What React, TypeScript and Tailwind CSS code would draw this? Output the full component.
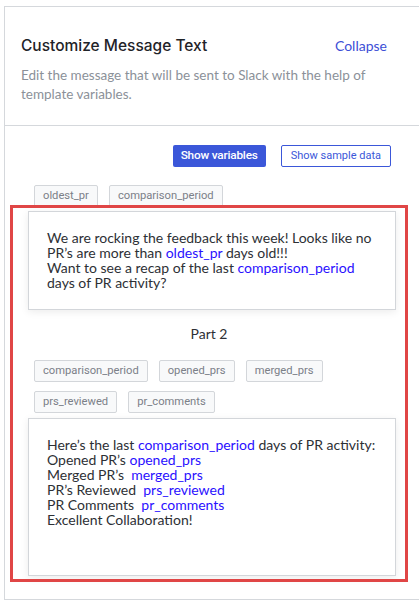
import React from "react";

const Chip = ({ label }: { label: string }) => (
  <div className="h-[22px] px-[8px] flex items-center bg-[#f8f9fa] border border-[#d3d6da] rounded-[2px] text-[11.2px] text-[#7b8088] leading-none" style={{ fontFamily: "Roboto, sans-serif" }}>
    {label}
  </div>
);

const V = ({ children }: { children: React.ReactNode }) => (
  <span className="text-[#2a10ff]">{children}</span>
);

export default function App() {
  const lato = { fontFamily: "Lato, 'Noto Sans', sans-serif" };
  const inter = { fontFamily: "Inter, 'Noto Sans', sans-serif" };
  const roboto = { fontFamily: "Roboto, sans-serif" };
  return (
    <div className="relative w-[419px] h-[600px] bg-white overflow-hidden" style={lato}>
      <div className="ml-[4px] mt-[6px] h-[594px] border border-r-0 border-[#d5d8dc] flex flex-col">
        <div className="h-[119px] border-b border-[#d5d8dc] pl-[16px] pr-[32px] pt-[29px]">
          <div className="flex justify-between items-center">
            <div className="text-[15.5px] font-medium text-[#1f2328] leading-[20px]" style={inter}>Customize Message Text</div>
            <div className="text-[14px] text-[#3d4fd6] leading-[20px]">Collapse</div>
          </div>
          <div className="mt-[10px] text-[13.5px] leading-[19px] text-[#8b9199] pr-[2px]">
            Edit the message that will be sent to Slack with the help of template variables.
          </div>
        </div>
        <div className="flex flex-col">
          <div className="flex justify-end gap-[15px] pt-[19px] pr-[28px]" style={roboto}>
            <button className="h-[22px] px-[8px] bg-[#3b57d9] text-white text-[11.8px] font-medium tracking-[-0.2px] rounded-[2px]">Show variables</button>
            <button className="h-[22px] px-[9px] bg-white border border-[#3b57d9] text-[#3b57d9] text-[11px] rounded-[2px]">Show sample data</button>
          </div>
          <div className="flex gap-[11px] pl-[29px] mt-[18px]">
            <Chip label="oldest_pr" />
            <Chip label="comparison_period" />
          </div>
          <div className="ml-[23px] mt-[4px] w-[368px] h-[99px] border border-[#d3d6da] shadow-[0_2px_8px_rgba(0,0,0,0.08)] pl-[18px] pr-[10px] pt-[18px] text-[14px] leading-[15px] text-[#2d3035]">
            We are rocking the feedback this week! Looks like no PR’s are more than <V>oldest_pr</V> days old!!!
            <br />
            Want to see a recap of the last <V>comparison_period</V> days of PR activity?
          </div>
          <div className="text-center text-[14px] text-[#2d3035] mt-[14px] leading-[20px] pr-[6px]">Part 2</div>
          <div className="flex flex-col gap-[9px] pl-[29px] mt-[16px]">
            <div className="flex gap-[11px]">
              <Chip label="comparison_period" />
              <Chip label="opened_prs" />
              <Chip label="merged_prs" />
            </div>
            <div className="flex gap-[11px]">
              <Chip label="prs_reviewed" />
              <Chip label="pr_comments" />
            </div>
          </div>
          <div className="ml-[23px] mt-[5px] w-[368px] h-[158px] border border-[#d3d6da] shadow-[0_2px_8px_rgba(0,0,0,0.08)] pl-[18px] pr-[10px] pt-[18px] text-[14px] leading-[15px] text-[#2d3035]">
            <div>Here’s the last <V>comparison_period</V> days of PR activity:</div>
            <div>Opened PR’s <V>opened_prs</V></div>
            <div>Merged PR’s&nbsp; <V>merged_prs</V></div>
            <div>PR’s Reviewed&nbsp; <V>prs_reviewed</V></div>
            <div>PR Comments&nbsp; <V>pr_comments</V></div>
            <div>Excellent Collaboration!</div>
          </div>
        </div>
      </div>
      <div className="absolute left-[10px] top-[205px] w-[398px] h-[377px] border-[3px] border-[#e04646] pointer-events-none" />
    </div>
  );
}
